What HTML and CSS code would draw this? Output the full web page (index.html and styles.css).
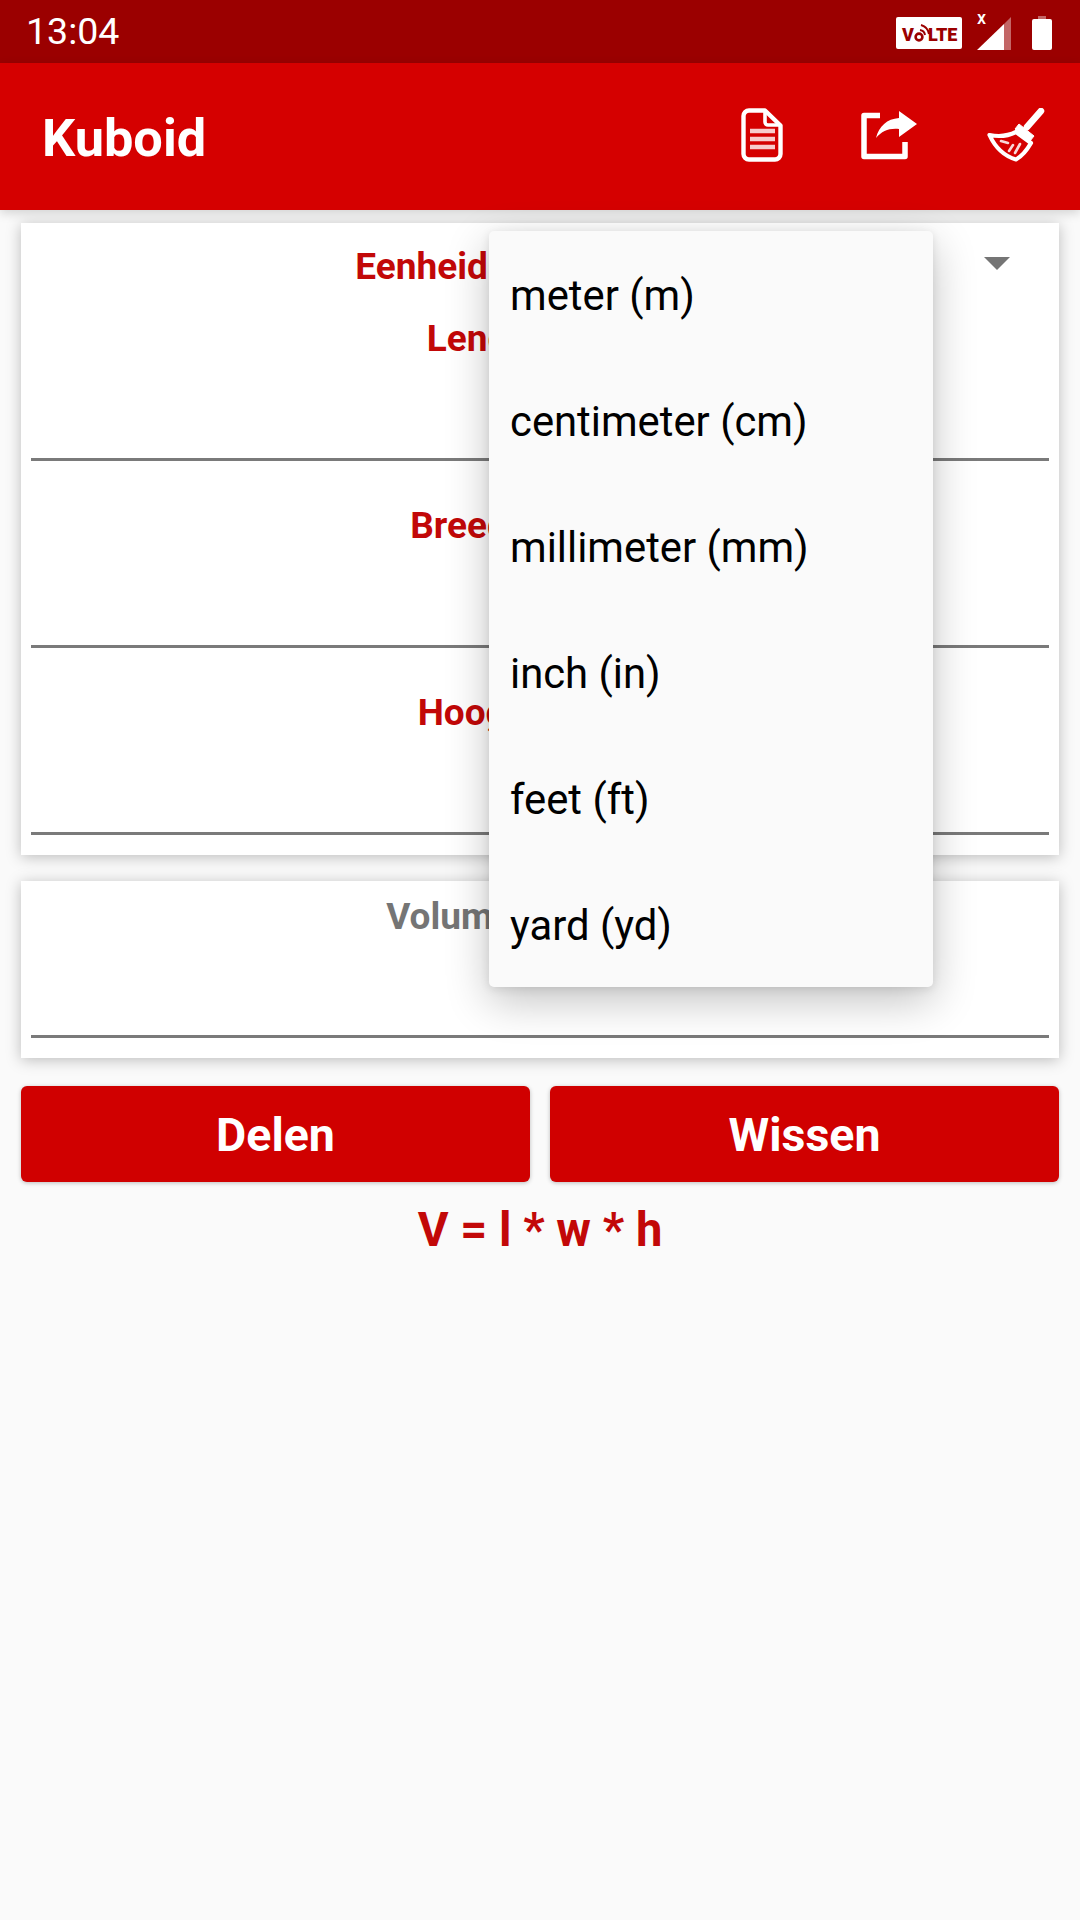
FILE: index.html
```html
<!DOCTYPE html>
<html lang="nl">
<head>
<meta charset="utf-8">
<title>Kuboid</title>
<link rel="stylesheet" href="styles.css">
</head>
<body>
<div class="screen">
  <header class="statusbar">
    <span class="time">13:04</span>
    <div class="status-icons">
      <svg class="volte" width="66" height="32" viewBox="0 0 66 32">
        <rect width="66" height="32" rx="2" fill="#fff"/>
        <text class="volte-text" x="6" y="24">V</text>
        <circle cx="23" cy="20" r="3.4" fill="none" stroke="#9b0000" stroke-width="2.6"/>
        <path d="M24 13a6 6 0 0 1 5 5M25 8a11 11 0 0 1 8 9" fill="none" stroke="#9b0000" stroke-width="2"/>
        <text class="volte-text" x="32" y="24">LTE</text>
      </svg>
      <div class="signal">
        <span class="signal-x">x</span>
        <svg width="34" height="34" viewBox="0 0 34 34">
          <path d="M0 34 27 8V34Z" fill="#fff"/>
          <path d="M27 8 34 1V34H27Z" fill="#fff" fill-opacity=".4"/>
        </svg>
      </div>
      <svg class="battery" width="20" height="34" viewBox="0 0 20 34">
        <path d="M6 0h8v3H6Z" fill="#fff" fill-opacity=".4"/>
        <path d="M2 3h16a2 2 0 0 1 2 2v27a2 2 0 0 1-2 2H2a2 2 0 0 1-2-2V5a2 2 0 0 1 2-2Z" fill="#fff"/>
      </svg>
    </div>
  </header>

  <header class="toolbar">
    <h1 class="title">Kuboid</h1>
    <div class="actions">
      <svg class="action" width="42" height="54" viewBox="0 0 42 54" fill="none" stroke="#fff" stroke-linejoin="round">
        <path d="M8 2.500h16l15.500 15V46a5.500 5.500 0 0 1-5.500 5.500H8A5.500 5.500 0 0 1 2.500 46V8A5.500 5.500 0 0 1 8 2.500Z" stroke-width="4.400"/>
        <path d="M24 3v11a3 3 0 0 0 3 3h12" stroke-width="3.600"/>
        <path d="M9 23h25M9 31h25M9 39h25" stroke-width="4.500" stroke-opacity=".8"/>
      </svg>
      <svg class="action" width="57" height="50" viewBox="0 0 57 50" fill="none">
        <path d="M19 5.500H3V46.500H44V32" stroke="#fff" stroke-width="5.500" stroke-linejoin="round"/>
        <path d="M38 1 56 14 38 27V19C28 18 21 21 15 28 18 16 26 9 38 8Z" fill="#fff"/>
      </svg>
      <svg class="action action-broom" width="58" height="54" viewBox="0 0 58 54" fill="none" stroke="#fff">
        <path d="M40 19 54 3" stroke-width="6.500" stroke-linecap="round"/>
        <path d="M32 16 47 28 43 33 28 21Z" fill="#fff" stroke-width="1"/>
        <path d="M2.500 27C12 29 21 28 29 24L44 35C40 42 35 48 29 51.500 17 48 8 39 2.500 27Z" stroke-width="4.200" stroke-linejoin="round"/>
        <path d="M14 33 21 35M26 37 22 43M33 36 28 45" stroke-width="2.600" stroke-linecap="round" stroke-opacity=".85"/>
      </svg>
    </div>
  </header>

  <main class="content">
    <section class="card card-inputs">
      <div class="unit-row">
        <span class="label label-red label-unit">Eenheid van de lengte:</span>
        <span class="caret"></span>
      </div>
      <div class="field">
        <span class="label label-red">Lengte (l) (m)</span>
        <div class="line"></div>
      </div>
      <div class="field">
        <span class="label label-red">Breedte (w) (m)</span>
        <div class="line"></div>
      </div>
      <div class="field">
        <span class="label label-red">Hoogte (h) (m)</span>
        <div class="line"></div>
      </div>
    </section>

    <section class="card card-result">
      <span class="label label-grey">Volume (V) in (m³)</span>
      <div class="line line-result"></div>
    </section>

    <div class="buttons">
      <button class="btn">Delen</button>
      <button class="btn">Wissen</button>
    </div>

    <p class="formula">V = l * w * h</p>
  </main>

  <ul class="menu">
    <li class="menu-item">meter (m)</li>
    <li class="menu-item">centimeter (cm)</li>
    <li class="menu-item">millimeter (mm)</li>
    <li class="menu-item">inch (in)</li>
    <li class="menu-item">feet (ft)</li>
    <li class="menu-item">yard (yd)</li>
  </ul>
</div>
</body>
</html>
```
FILE: styles.css
```css
* { box-sizing: border-box; }
html, body { margin: 0; padding: 0; }
body { font-family: Roboto, "Noto Sans", sans-serif; background: #fafafa; }

.screen { position: relative; width: 1080px; height: 1920px; overflow: hidden; background: #fafafa; }

.statusbar {
  height: 63px; background: #9b0000; color: #fff;
  display: flex; align-items: center; justify-content: space-between;
  padding: 0 28px 0 26px;
}
.time { font-size: 37.5px; line-height: 63px; }
.status-icons { display: flex; align-items: center; gap: 15px; margin-top: 2px; }
.battery { margin-left: 6px; }
.volte-text { font: 900 18px Roboto, sans-serif; fill: #9b0000; }
.signal { position: relative; width: 34px; height: 34px; }
.signal-x { position: absolute; left: 0; top: -7px; font-size: 18px; line-height: 18px; font-weight: 500; }

.toolbar {
  height: 147px; background: #d50000; color: #fff;
  display: flex; align-items: center; justify-content: space-between;
  padding: 0 35px 0 42px;
  box-shadow: 0 3px 10px rgba(0,0,0,.16);
  position: relative;
}
.title { margin: 0; padding-top: 2px; font-size: 52.300px; font-weight: 700; }
.actions { display: flex; align-items: center; gap: 78px; margin-top: -3px; }
.action { filter: blur(.5px); }
.action-broom { margin-left: -9px; }

.content { padding: 13px 21px 0; display: flex; flex-direction: column; }
.card { background: #fff; box-shadow: 0 2px 14px rgba(0,0,0,.25); display: flex; flex-direction: column; align-items: stretch; padding: 0 10px; }
.card-inputs { height: 632px; }
.card-result { height: 177px; margin-top: 26px; padding-top: 12px; }

.label { display: block; text-align: center; font-size: 37px; line-height: 48px; font-weight: 700; }
.label-unit { padding-left: 5px; }
.label-red { color: #c20808; }
.label-grey { color: #757575; }

.unit-row { position: relative; padding-top: 20px; margin-bottom: -17px; }
.caret {
  position: absolute; right: 39px; top: 34px; width: 0; height: 0;
  border-left: 13.500px solid transparent; border-right: 13.500px solid transparent;
  border-top: 13px solid #757575;
}
.field { display: flex; flex-direction: column; height: 146px; margin-top: 41px; }
.field .line { margin-top: auto; }
.line { height: 3px; background: #7a7a7a; }
.line-result { margin-top: 94px; }

.buttons { display: grid; grid-template-columns: 1fr 1fr; gap: 20px; margin-top: 28px; }
.btn {
  height: 96px; border: 0; border-radius: 6px; background: #d00000; color: #fff;
  font: 700 46.500px Roboto, sans-serif; padding: 2px 0 0;
  box-shadow: 0 1px 4px rgba(0,0,0,.25);
}
.formula { margin: 20px 0 0; text-align: center; color: #c20808; font-size: 47.200px; line-height: 56px; font-weight: 700; }

.menu {
  position: absolute; left: 489px; top: 231px; width: 444px; height: 756px;
  margin: 0; padding: 0; list-style: none; background: #fafafa; border-radius: 5px;
  box-shadow: 0 14px 44px rgba(0,0,0,.24), 0 2px 10px rgba(0,0,0,.1);
}
.menu-item { height: 126px; line-height: 130px; padding-left: 21px; font-size: 41.800px; color: #000; }
```
